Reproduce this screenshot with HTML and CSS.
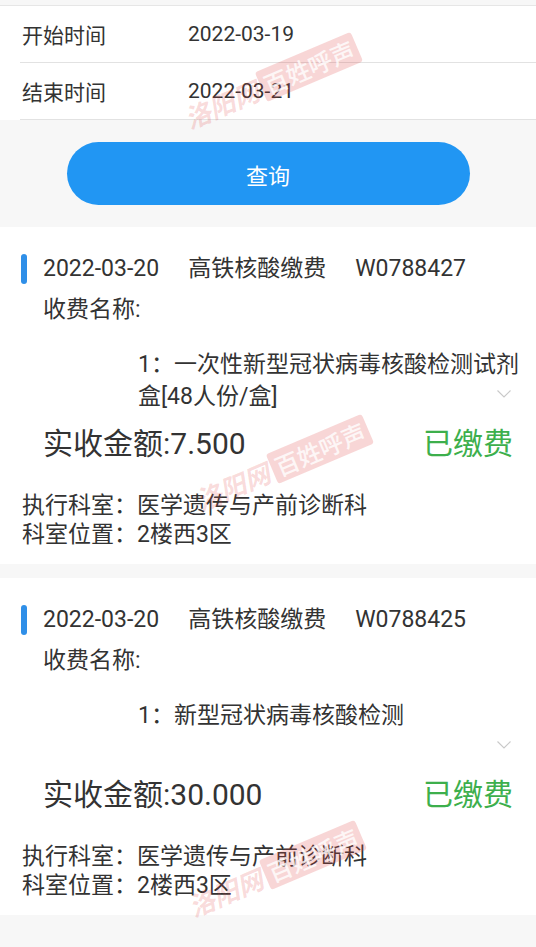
FILE: index.html
```html
<!DOCTYPE html>
<html lang="zh-CN">
<head>
<meta charset="utf-8">
<title>缴费查询</title>
<link rel="stylesheet" href="styles.css">
</head>
<body>
<div class="page">
  <section class="filter">
    <div class="row"><span class="label">开始时间</span><span class="value">2022-03-19</span></div>
    <div class="row"><span class="label">结束时间</span><span class="value">2022-03-21</span></div>
  </section>
  <div class="actions"><button class="query">查询</button></div>

  <section class="card">
    <div class="card-head"><span class="bar"></span><span class="date">2022-03-20</span><span class="type">高铁核酸缴费</span><span class="no">W0788427</span></div>
    <div class="fee-name">收费名称:</div>
    <div class="items">
      <div class="item">1：一次性新型冠状病毒核酸检测试剂盒[48人份/盒]</div>
      <svg class="chev" width="14" height="8" viewBox="0 0 14 8"><polyline points="0.5,0.5 7,7 13.5,0.5" fill="none" stroke="#c9c9c9" stroke-width="1.1"/></svg>
    </div>
    <div class="amount-row"><span class="amount">实收金额:7.500</span><span class="status">已缴费</span></div>
    <div class="dept">
      <div>执行科室：医学遗传与产前诊断科</div>
      <div>科室位置：2楼西3区</div>
    </div>
  </section>

  <section class="card">
    <div class="card-head"><span class="bar"></span><span class="date">2022-03-20</span><span class="type">高铁核酸缴费</span><span class="no">W0788425</span></div>
    <div class="fee-name">收费名称:</div>
    <div class="items">
      <div class="item">1：新型冠状病毒核酸检测</div>
      <svg class="chev" width="14" height="8" viewBox="0 0 14 8"><polyline points="0.5,0.5 7,7 13.5,0.5" fill="none" stroke="#c9c9c9" stroke-width="1.1"/></svg>
    </div>
    <div class="amount-row"><span class="amount">实收金额:30.000</span><span class="status">已缴费</span></div>
    <div class="dept">
      <div>执行科室：医学遗传与产前诊断科</div>
      <div>科室位置：2楼西3区</div>
    </div>
  </section>

  <div class="wm wm1"><span class="brand">洛阳网</span><span class="box">百姓呼声</span></div>
  <div class="wm wm2"><span class="brand">洛阳网</span><span class="box">百姓呼声</span></div>
  <div class="wm wm3"><span class="brand">洛阳网</span><span class="box">百姓呼声</span></div>
</div>
</body>
</html>
```

FILE: styles.css
```css
html, body {
  margin: 0;
  padding: 0;
}
body {
  background: #f7f7f7;
  font-family: Roboto, "Noto Sans CJK SC", sans-serif;
  color: #333;
}
.page {
  position: relative;
  min-height: 947px;
  overflow: hidden;
}
.filter {
  margin-top: 5px;
  background: #fff;
  border-top: 1px solid #e6e6e6;
}
.row {
  display: flex;
  align-items: center;
  height: 56px;
  margin-left: 20px;
  padding-left: 2px;
  border-bottom: 1px solid #e2e2e2;
  font-size: 21px;
}
.label {
  width: 166px;
}
.actions {
  padding: 22px 0 22px;
}
.query {
  display: block;
  width: 403px;
  height: 63px;
  margin: 0 auto;
  border: none;
  border-radius: 32px;
  background: #2196f3;
  color: #fff;
  font-family: Roboto, "Noto Sans CJK SC", sans-serif;
  font-size: 22px;
  padding: 0;
}
.card {
  box-sizing: border-box;
  height: 337px;
  background: #fff;
  padding-top: 26px;
  margin-bottom: 14px;
}
.card-head {
  display: flex;
  align-items: center;
  padding-left: 21px;
  font-size: 23px;
  line-height: 31px;
}
.bar {
  width: 6px;
  height: 30px;
  border-radius: 3px;
  background: #2f8fe8;
  margin-right: 16px;
}
.date, .type {
  margin-right: 29px;
}
.fee-name {
  margin-top: 10px;
  padding-left: 43px;
  font-size: 23px;
  line-height: 31px;
}
.items {
  position: relative;
  box-sizing: border-box;
  height: 96px;
  padding: 24px 8px 0 138px;
  font-size: 23px;
  line-height: 32px;
}
.chev {
  position: absolute;
  right: 25px;
  bottom: 23px;
}
.amount-row {
  display: flex;
  justify-content: space-between;
  align-items: center;
  height: 40px;
  padding: 0 23px 0 43px;
  font-size: 30px;
}
.status {
  color: #3daf4c;
}
.dept {
  margin-top: 30px;
  padding-left: 22px;
  font-size: 23px;
  line-height: 29px;
}
.wm {
  position: absolute;
  display: flex;
  align-items: center;
  gap: 4px;
  white-space: nowrap;
  transform: rotate(-23deg);
  transform-origin: center;
  pointer-events: none;
  font-family: "Noto Sans CJK SC", sans-serif;
}
.wm .brand {
  font-size: 26px;
  font-weight: 700;
  font-style: italic;
  color: rgba(225, 70, 70, 0.2);
}
.wm .box {
  font-size: 24px;
  font-weight: 500;
  line-height: 32px;
  padding: 0 4px;
  border-radius: 3px;
  color: rgba(255, 255, 255, 0.8);
  background: rgba(225, 70, 70, 0.22);
}
.wm1 { left: 178px; top: 64px; }
.wm2 { left: 189px; top: 446px; }
.wm3 { left: 182px; top: 852px; }
```
